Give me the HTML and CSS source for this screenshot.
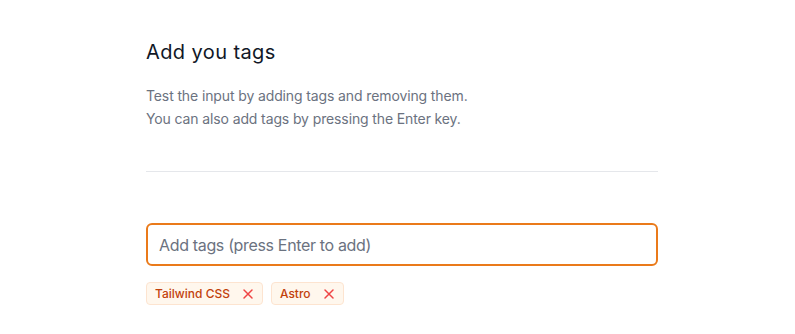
FILE: index.html
```html
<!DOCTYPE html>
<html lang="en">
<head>
<meta charset="utf-8">
<title>Add you tags</title>
<link rel="stylesheet" href="styles.css">
</head>
<body>
<main class="panel">
  <h2 class="title">Add you tags</h2>
  <p class="desc">Test the input by adding tags and removing them.<br>You can also add tags by pressing the Enter key.</p>
  <hr class="divider">
  <div class="field">Add tags (press Enter to add)</div>
  <ul class="tags">
    <li class="tag"><span>Tailwind CSS</span><svg class="x" viewBox="0 0 12 12" width="12" height="12"><path d="M2 2L10 10M10 2L2 10" stroke="currentColor" stroke-width="1.5" stroke-linecap="round"/></svg></li>
    <li class="tag"><span>Astro</span><svg class="x" viewBox="0 0 12 12" width="12" height="12"><path d="M2 2L10 10M10 2L2 10" stroke="currentColor" stroke-width="1.5" stroke-linecap="round"/></svg></li>
  </ul>
</main>
</body>
</html>
```

FILE: styles.css
```css
* { box-sizing: border-box; }
html, body { margin: 0; background: #ffffff; }
body { font-family: Inter, "Noto Sans", sans-serif; }
.panel { width: 512px; margin-left: 146px; padding-top: 38px; }
.title { margin: 0; font-size: 20px; line-height: 28px; font-weight: 400; color: #111827; letter-spacing: 0.4px; }
.desc { margin: 18px 0 0; font-size: 14px; line-height: 23px; color: #6b7280; letter-spacing: -0.12px; }
.divider { margin: 41px 0 0; border: 0; border-top: 1px solid #e5e7eb; height: 0; }
.field { margin-top: 51px; height: 43px; border: 2px solid #ea7a1a; border-radius: 6px; padding: 0 11px; display: flex; align-items: center; font-size: 16px; color: #6b7280; letter-spacing: -0.34px; }
.tags { list-style: none; margin: 16px 0 0; padding: 0; display: flex; gap: 8px; }
.tag { display: flex; align-items: center; gap: 12px; height: 23px; padding: 0 8px; background: #fff7ed; border: 1px solid #fde4d0; border-radius: 4px; font-size: 12px; font-weight: 500; color: #c2410c; }
.x { color: #ef4444; display: block; }
```
